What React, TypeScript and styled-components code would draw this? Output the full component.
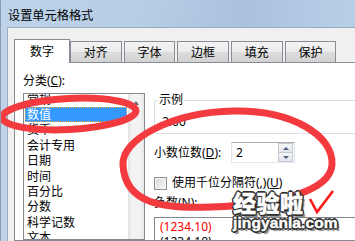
import React from "react";
import styled, { createGlobalStyle } from "styled-components";

const FONT = `"Noto Sans", "Noto Sans CJK SC", sans-serif`;

const GlobalStyle = createGlobalStyle`
  html, body {
    margin: 0;
    padding: 0;
    overflow: hidden;
    background: #ffffff;
  }
  #root {
    width: 355px;
    height: 241px;
    overflow: hidden;
    position: relative;
  }
`;

const Window = styled.div`
  position: relative;
  width: 420px;
  height: 241px;
  display: flex;
  flex-direction: column;
  background: #bfd2e7;
  border-left: 1px solid #8a9bb0;
  font-family: ${FONT};
  font-size: 12px;
  color: #000;
`;

const TitleBar = styled.div`
  flex: none;
  height: 27px;
  box-sizing: border-box;
  padding: 3px 0 0 7px;
  display: flex;
  align-items: center;
  font-size: 12.2px;
  background: linear-gradient(
    100deg,
    #bdd3ea 0%,
    #b6cde6 35%,
    #a9c1db 58%,
    #b3cbe4 75%,
    #bed4eb 100%
  );
`;

const Client = styled.div`
  flex: 1;
  min-height: 0;
  display: flex;
  flex-direction: column;
  margin-left: 6px;
  padding: 11px 0 0 6px;
  background: #f0f0f0;
  border-top: 1px solid #9aadc3;
  border-left: 1px solid #9aadc3;
`;

const TabStrip = styled.div`
  display: flex;
  align-items: flex-end;
  height: 24px;
  margin-bottom: -1px;
  position: relative;
  z-index: 1;
`;

const Tab = styled.div<{ $active?: boolean }>`
  box-sizing: border-box;
  display: flex;
  align-items: center;
  justify-content: center;
  border: 1px solid #898c95;
  border-bottom: none;
  line-height: 14px;
  ${({ $active }) =>
    $active
      ? `
    width: 56px;
    height: 24px;
    background: #ffffff;
    padding-top: 0;
  `
      : `
    width: 51.5px;
    height: 21px;
    margin-bottom: 1px;
    margin-left: 2.2px;
    padding-top: 1px;
    background: linear-gradient(#f3f3f3 0%, #ebebeb 50%, #dddddd 51%, #d2d2d2 100%);
    &:nth-child(2) { margin-left: 0; }
  `}
`;

const Panel = styled.div`
  flex: 1;
  min-height: 0;
  display: flex;
  background: #ffffff;
  border: 1px solid #898c95;
  overflow: hidden;
`;

const LeftCol = styled.div`
  flex: none;
  width: 130px;
  box-sizing: border-box;
  padding: 10px 0 0 8px;
  display: flex;
  flex-direction: column;
`;

const FieldLabel = styled.div`
  line-height: 15px;
  white-space: nowrap;
`;

const Key = styled.span`
  text-decoration: underline;
`;

const CategoryList = styled.div`
  flex: 1;
  margin-top: 5px;
  display: flex;
  border: 1px solid #828790;
  overflow: hidden;
`;

const Items = styled.div`
  flex: 1;
  overflow: hidden;
`;

const ItemsInner = styled.div`
  margin-top: -2.4px;
`;

const Item = styled.div<{ $selected?: boolean }>`
  height: 15.4px;
  line-height: 15.4px;
  margin: 0 1px;
  padding-left: 2px;
  white-space: nowrap;
  box-sizing: border-box;
  ${({ $selected }) =>
    $selected &&
    `
    background: #3399ff;
    color: #ffffff;
    outline: 1px dotted #f2a65a;
    outline-offset: -1px;
  `}
`;

const ScrollBar = styled.div`
  flex: none;
  width: 16px;
  background: linear-gradient(to right, #e2e2e2, #f3f3f3 25%, #f3f3f3 75%, #e6e6e6);
`;

const ScrollButton = styled.div`
  height: 17px;
  display: flex;
  align-items: center;
  justify-content: center;
`;

const ArrowUp = styled.span`
  width: 0;
  height: 0;
  border-left: 3.5px solid transparent;
  border-right: 3.5px solid transparent;
  border-bottom: 4px solid #666a70;
`;

const RightCol = styled.div`
  flex: none;
  width: 250px;
  margin-left: 9px;
  padding-top: 30px;
  display: flex;
  flex-direction: column;
`;

const GroupBox = styled.fieldset`
  margin: 0;
  min-width: 0;
  padding: 8px 0 4px 3px;
  border: 1px solid #d5dfe5;
  border-radius: 3px;
`;

const GroupLegend = styled.legend`
  padding: 0 1px;
  line-height: 14px;
`;

const SampleValue = styled.div`
  margin-left: 4px;
  line-height: 14px;
`;

const SpinRow = styled.div`
  display: flex;
  align-items: center;
  height: 21px;
  margin-top: 8px;
`;

const SpinLabel = styled.div`
  width: 77px;
  line-height: 14px;
  white-space: nowrap;
`;

const SpinBox = styled.div`
  box-sizing: border-box;
  width: 64px;
  height: 21px;
  display: flex;
  align-items: center;
  border: 1px solid #abadb3;
  border-color: #abadb3 #dbdfe6 #e3e9ef #e2e3ea;
  background: #ffffff;
`;

const SpinValue = styled.div`
  flex: 1;
  padding-left: 4px;
  line-height: 14px;
`;

const SpinButtons = styled.div`
  width: 15px;
  height: 19px;
  margin-right: 1px;
  display: flex;
  flex-direction: column;
`;

const SpinButton = styled.div`
  flex: 1;
  display: flex;
  align-items: center;
  justify-content: center;
  box-sizing: border-box;
  border: 1px solid #c3c8d1;
  background: linear-gradient(#f6f7f9, #e3e6ec);
  & + & {
    border-top: none;
  }
`;

const SpinTriangle = styled.span<{ $down?: boolean }>`
  width: 0;
  height: 0;
  border-left: 3px solid transparent;
  border-right: 3px solid transparent;
  ${({ $down }) =>
    $down
      ? `border-top: 3px solid #4d5f80;`
      : `border-bottom: 3px solid #4d5f80;`}
`;

const CheckRow = styled.div`
  display: flex;
  align-items: center;
  height: 14px;
  margin-top: 13px;
`;

const CheckBox = styled.span`
  box-sizing: border-box;
  width: 13px;
  height: 13px;
  border: 1px solid #8e8f8f;
  background: linear-gradient(135deg, #d8d8d8, #f7f7f7);
  box-shadow: inset 0 0 0 1px #f4f4f4;
`;

const CheckLabel = styled.span`
  margin-left: 5px;
  line-height: 14px;
  white-space: nowrap;
`;

const NegLabel = styled(FieldLabel)`
  margin-top: 6px;
  line-height: 14px;
`;

const NegList = styled.div`
  flex: 1;
  margin-top: 7px;
  padding: 1px 0 0 5px;
  border: 1px solid #828790;
  font-family: "Noto Sans", "Liberation Sans", sans-serif;
`;

const NegItem = styled.div<{ $red?: boolean }>`
  line-height: 15px;
  color: ${({ $red }) => ($red ? "#ff0000" : "#000000")};
`;

const Marks = styled.svg`
  position: absolute;
  left: 0;
  top: 0;
  pointer-events: none;
`;

const OUTLINE = "#2f2f2f";

const Watermark = styled.div`
  position: absolute;
  left: 232px;
  top: 191px;
  display: flex;
  flex-direction: column;
  color: #ffffff;
  -webkit-text-stroke: 0.4px #ffffff;
  text-shadow: -1.3px -1.3px 0 ${OUTLINE}, 1.3px -1.3px 0 ${OUTLINE},
    -1.3px 1.3px 0 ${OUTLINE}, 1.3px 1.3px 0 ${OUTLINE}, 0 -1.6px 0 ${OUTLINE},
    0 1.6px 0 ${OUTLINE}, -1.6px 0 0 ${OUTLINE}, 1.6px 0 0 ${OUTLINE},
    2.5px 2.5px 1px rgba(0, 0, 0, 0.5);
  pointer-events: none;
`;

const WatermarkBig = styled.div`
  font-family: "Noto Sans CJK SC", sans-serif;
  font-weight: 900;
  font-size: 23px;
  line-height: 23px;
  letter-spacing: 0.5px;
`;

const WatermarkSite = styled.div`
  margin-top: 1px;
  font-family: "Liberation Sans", Arial, sans-serif;
  font-weight: 700;
  font-size: 15.5px;
  line-height: 16px;
  letter-spacing: 0.1px;
`;

const categories = [
  "常规",
  "数值",
  "货币",
  "会计专用",
  "日期",
  "时间",
  "百分比",
  "分数",
  "科学记数",
  "文本",
  "特殊",
  "自定义",
];

const tabs = ["数字", "对齐", "字体", "边框", "填充", "保护"];

const RED = "#f33b3f";

export default function App() {
  return (
    <>
      <GlobalStyle />
      <Window>
        <TitleBar>设置单元格格式</TitleBar>
        <Client>
          <TabStrip>
            {tabs.map((t, i) => (
              <Tab key={t} $active={i === 0}>
                {t}
              </Tab>
            ))}
          </TabStrip>
          <Panel>
            <LeftCol>
              <FieldLabel>
                分类(<Key>C</Key>):
              </FieldLabel>
              <CategoryList>
                <Items>
                  <ItemsInner>
                    {categories.map((c) => (
                      <Item key={c} $selected={c === "数值"}>
                        {c}
                      </Item>
                    ))}
                  </ItemsInner>
                </Items>
                <ScrollBar>
                  <ScrollButton>
                    <ArrowUp />
                  </ScrollButton>
                </ScrollBar>
              </CategoryList>
            </LeftCol>
            <RightCol>
              <GroupBox>
                <GroupLegend>示例</GroupLegend>
                <SampleValue>2.00</SampleValue>
              </GroupBox>
              <SpinRow>
                <SpinLabel>
                  小数位数(<Key>D</Key>):
                </SpinLabel>
                <SpinBox>
                  <SpinValue>2</SpinValue>
                  <SpinButtons>
                    <SpinButton>
                      <SpinTriangle />
                    </SpinButton>
                    <SpinButton>
                      <SpinTriangle $down />
                    </SpinButton>
                  </SpinButtons>
                </SpinBox>
              </SpinRow>
              <CheckRow>
                <CheckBox />
                <CheckLabel>
                  使用千位分隔符(,)(<Key>U</Key>)
                </CheckLabel>
              </CheckRow>
              <NegLabel>
                负数(<Key>N</Key>):
              </NegLabel>
              <NegList>
                <NegItem $red>(1234.10)</NegItem>
                <NegItem>(1234.10)</NegItem>
                <NegItem>-1234.10</NegItem>
              </NegList>
            </RightCol>
          </Panel>
        </Client>
        <Marks width="355" height="241" viewBox="0 0 355 241">
          <ellipse
            cx="68"
            cy="114"
            rx="67"
            ry="15.5"
            transform="rotate(-3 68 114)"
            fill="none"
            stroke={RED}
            strokeWidth="7"
          />
          <path
            d="M 122 165 C 120 140, 170 112, 233 111 C 290 110, 333 135, 331 165 C 329 190, 280 205, 210 207 C 165 209, 124 205, 122 165 Z"
            fill="none"
            stroke={RED}
            strokeWidth="7"
          />
          <path
            d="M 309 199 L 316 212 L 332 191"
            fill="none"
            stroke="#ff1a1a"
            strokeWidth="2.6"
            strokeLinejoin="miter"
          />
        </Marks>
        <Watermark>
          <WatermarkBig>经验啦</WatermarkBig>
          <WatermarkSite>jingyanla.com</WatermarkSite>
        </Watermark>
      </Window>
    </>
  );
}
